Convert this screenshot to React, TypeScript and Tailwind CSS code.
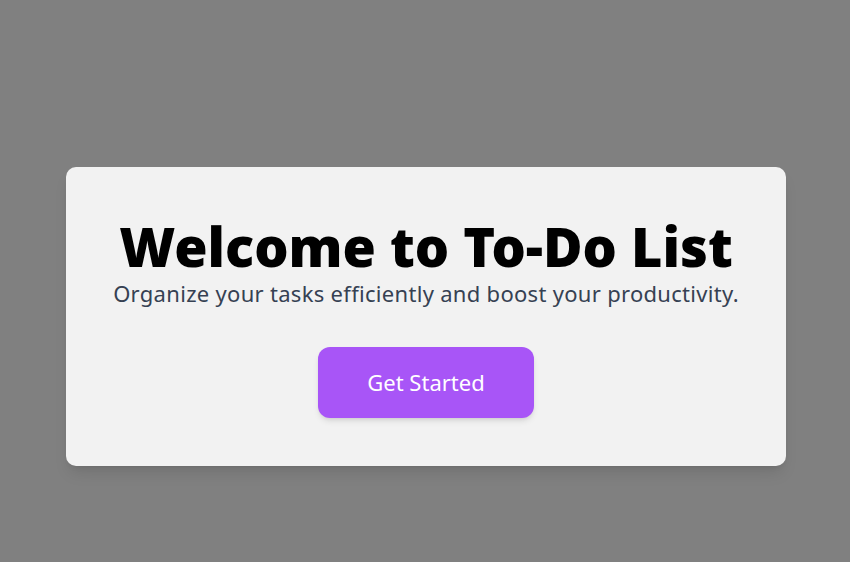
export default function App() {
  return (
    <div className="min-h-screen bg-[#808080] flex justify-center items-start pt-[167px] pl-[2px] font-['Noto_Sans',sans-serif]">
      <div className="w-[720px] bg-[#f2f2f2] rounded-[10px] shadow-lg p-12 flex flex-col items-center text-center">
        <h1 className="text-[54px] leading-[62px] font-black text-black whitespace-nowrap">Welcome to To-Do List</h1>
        <p className="text-[22px] leading-[33px] tracking-[0.3px] text-gray-700 whitespace-nowrap">Organize your tasks efficiently and boost your productivity.</p>
        <button className="mt-[37px] w-[216px] h-[71px] rounded-xl bg-[#a855f7] text-white text-[22px] shadow-md flex items-center justify-center">
          Get Started
        </button>
      </div>
    </div>
  );
}
